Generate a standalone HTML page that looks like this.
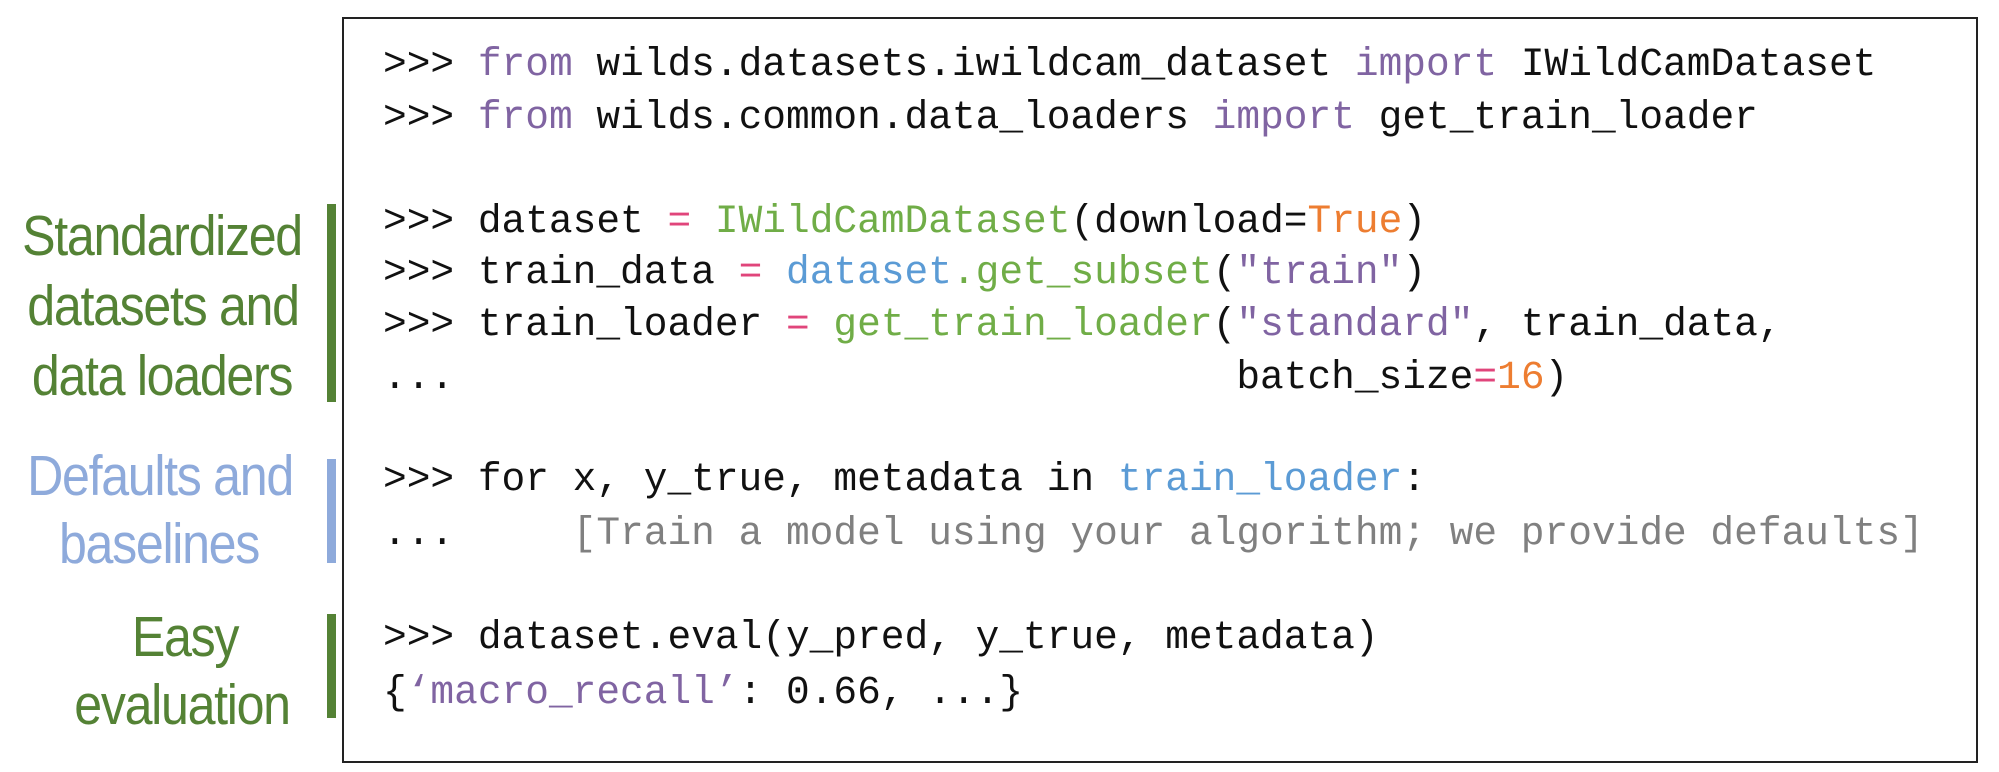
<!DOCTYPE html>
<html><head><meta charset="utf-8"><style>
html,body{margin:0;padding:0;background:#fff;width:1999px;height:772px;overflow:hidden;position:relative}
.box{position:absolute;left:342px;top:17px;width:1632px;height:742px;border:2px solid #222;box-sizing:content-box}
.c{position:absolute;left:383px;font-family:"Liberation Mono",monospace;font-size:39.5px;line-height:53px;white-space:pre;color:#111}
.l{position:absolute;font-family:"Liberation Sans",sans-serif;font-size:57px;line-height:64px;white-space:nowrap;transform:translateX(-50%) scaleX(0.88);letter-spacing:-1.5px}
.g{color:#548235}.b{color:#8eaadb}
.bar{position:absolute;left:327px;width:9px}
.p{color:#8064a2}.gr{color:#70ad47}.pk{color:#e0457b}.o{color:#ed7d31}.bl{color:#5b9bd5}.gy{color:#808080}
</style></head><body>
<div class="box"></div>
<div class="c" style="top:38px">&gt;&gt;&gt; <span class="p">from</span> wilds.datasets.iwildcam_dataset <span class="p">import</span> IWildCamDataset</div>
<div class="c" style="top:91px">&gt;&gt;&gt; <span class="p">from</span> wilds.common.data_loaders <span class="p">import</span> get_train_loader</div>
<div class="c" style="top:195px">&gt;&gt;&gt; dataset <span class="pk">=</span> <span class="gr">IWildCamDataset</span>(download=<span class="o">True</span>)</div>
<div class="c" style="top:246px">&gt;&gt;&gt; train_data <span class="pk">=</span> <span class="bl">dataset</span><span class="gr">.get_subset</span>(<span class="p">"train"</span>)</div>
<div class="c" style="top:298px">&gt;&gt;&gt; train_loader <span class="pk">=</span> <span class="gr">get_train_loader</span>(<span class="p">"standard"</span>, train_data,</div>
<div class="c" style="top:351px">...                                 batch_size<span class="pk">=</span><span class="o">16</span>)</div>
<div class="c" style="top:453px">&gt;&gt;&gt; for x, y_true, metadata in <span class="bl">train_loader</span>:</div>
<div class="c" style="top:507px">...     <span class="gy">[Train a model using your algorithm; we provide defaults]</span></div>
<div class="c" style="top:611px">&gt;&gt;&gt; dataset.eval(y_pred, y_true, metadata)</div>
<div class="c" style="top:666px">{<span class="p">‘macro_recall’</span>: 0.66, ...}</div>

<div class="l g" style="left:162px;top:204px">Standardized</div>
<div class="l g" style="left:163px;top:274px">datasets and</div>
<div class="l g" style="left:162px;top:344px">data loaders</div>
<div class="l b" style="left:160px;top:444px">Defaults and</div>
<div class="l b" style="left:159px;top:512px">baselines</div>
<div class="l g" style="left:185px;top:605px">Easy</div>
<div class="l g" style="left:182px;top:673px">evaluation</div>

<div class="bar" style="top:204px;height:198px;background:#548235"></div>
<div class="bar" style="top:459px;height:104px;background:#8eaadb"></div>
<div class="bar" style="top:614px;height:104px;background:#548235"></div>
</body></html>
